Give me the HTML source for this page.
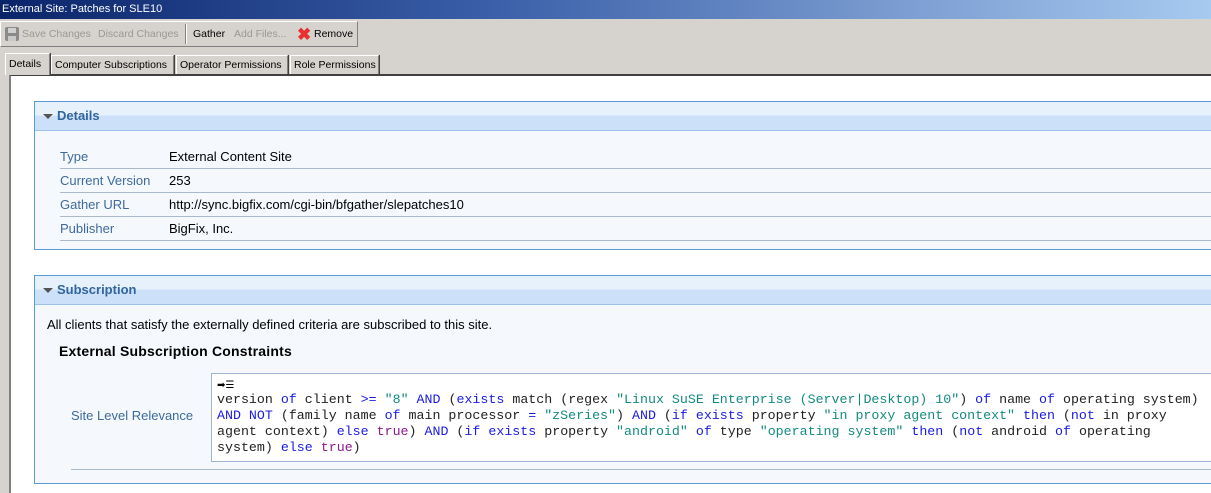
<!DOCTYPE html>
<html><head><style>
*{margin:0;padding:0;box-sizing:border-box}
body{width:1211px;height:493px;overflow:hidden;background:#d6d3ce;font-family:"Liberation Sans",sans-serif;font-size:12px;position:relative}
.a{position:absolute}
.title{left:0;top:0;width:1211px;height:19px;background:linear-gradient(90deg,#0a246a 0%,#3a5ea8 40%,#7c9ed2 75%,#a6caf0 100%);color:#fff;font-size:11px;line-height:19px;padding-left:2px}
.tb{left:0;top:21px;width:358px;height:26px;border:1px solid #808080;border-top-color:#fff;border-left-color:#fff;background:#d6d3ce;font-size:10.5px;line-height:25px;color:#000}
.tb span{position:absolute;top:0}
.dis{color:#9a9895}
.tab{top:55px;height:19px;border:1px solid #808080;border-bottom:none;border-left-color:#fff;border-top-color:#fff;background:#d6d3ce;font-size:10.5px;line-height:18px;padding:0 3px;box-shadow:1px 0 0 #404040;white-space:nowrap;overflow:hidden}
.content{left:9px;top:74px;width:1202px;height:419px;background:#fff;border-left:2px solid #808080;border-top:2px solid #404040}
.panel{left:34px;width:1180px;border:1px solid #5b9bd5;background:#f5f9fe}
.hd{height:29px;background:linear-gradient(#e6f1fc 0,#e6f1fc 48%,#cce0fa 48%);border-bottom:1px solid #9cc1ea;color:#31659c;font-weight:bold;font-size:13px;line-height:28px;padding-left:22px;position:relative}
.hd:before{content:"";position:absolute;left:8px;top:12px;border-left:5px solid transparent;border-right:5px solid transparent;border-top:5px solid #555}
.row{position:absolute;left:25px;width:1160px;height:24px;border-bottom:1px solid #a9b9cc;font-size:13px;line-height:24px}
.row .k{position:absolute;left:0;color:#3d6a9a}
.row .v{position:absolute;left:109px;color:#000}
.code{font-family:"Liberation Mono",monospace;font-size:13.3px;line-height:16px;color:#222;white-space:pre}
.b{color:#1a1ae6}.g{color:#138a80}.p{color:#8b1a8b}
</style></head><body>
<div class="a title">External Site: Patches for SLE10</div>
<div class="a tb">
<svg class="a" style="left:3px;top:4px" width="16" height="16" viewBox="0 0 16 16"><rect x="1" y="1" width="14" height="14" rx="2" fill="#8a8a8a"/><rect x="4" y="2" width="8" height="5" fill="#d0d0d0"/><rect x="4" y="10" width="8" height="5" fill="#c8c8c8"/></svg>
<span class="dis" style="left:21px">Save Changes</span>
<span class="dis" style="left:97px">Discard Changes</span>
<div class="a" style="left:184px;top:2px;width:2px;height:20px;border-left:1px solid #808080;border-right:1px solid #fff"></div>
<span style="left:192px">Gather</span>
<span class="dis" style="left:233px">Add Files...</span>
<span style="left:296px;color:#e83030;font-size:17px;font-weight:bold">✖</span>
<span style="left:313px">Remove</span>
</div>
<div class="a tab" style="left:5px;top:53px;height:22px;width:45px;background:#d6d3ce;z-index:2;line-height:20px">Details</div>
<div class="a tab" style="left:51px;width:123px">Computer Subscriptions</div>
<div class="a tab" style="left:176px;width:112px">Operator Permissions</div>
<div class="a tab" style="left:290px;width:89px">Role Permissions</div>
<div class="a content"></div>
<div class="a panel" style="top:101px;height:149px">
<div class="hd">Details</div>
<div class="row" style="top:43px"><span class="k">Type</span><span class="v">External Content Site</span></div>
<div class="row" style="top:67px"><span class="k">Current Version</span><span class="v">253</span></div>
<div class="row" style="top:91px"><span class="k">Gather URL</span><span class="v">http://sync.bigfix.com/cgi-bin/bfgather/slepatches10</span></div>
<div class="row" style="top:115px"><span class="k">Publisher</span><span class="v">BigFix, Inc.</span></div>
</div>
<div class="a panel" style="top:275px;height:209px">
<div class="hd">Subscription</div>
<div class="a" style="left:12px;top:41px;font-size:13px">All clients that satisfy the externally defined criteria are subscribed to this site.</div>
<div class="a" style="left:24px;top:67px;font-size:14px;font-weight:bold;letter-spacing:.2px">External Subscription Constraints</div>
<div class="a" style="left:36px;top:107px;width:1150px;height:87px;border-bottom:1px solid #a9b9cc"></div>
<div class="a" style="left:36px;top:132px;color:#3d6a9a;font-size:13px">Site Level Relevance</div>
<div class="a" style="left:176px;top:97px;width:1010px;height:89px;border:1px solid #a0b4d8;background:#fff;padding:6px 0 0 5px">
<div style="font-size:10px;line-height:11px">➡☰</div>
<div class="code" style="margin-top:1px">version <span class="b">of</span> client <span class="b">&gt;=</span> <span class="g">"8"</span> <span class="b">AND</span> (<span class="b">exists</span> match (regex <span class="g">"Linux SuSE Enterprise (Server|Desktop) 10"</span>) <span class="b">of</span> name <span class="b">of</span> operating system)
<span class="b">AND NOT</span> (family name <span class="b">of</span> main processor <span class="b">=</span> <span class="g">"zSeries"</span>) <span class="b">AND</span> (<span class="b">if exists</span> property <span class="g">"in proxy agent context"</span> <span class="b">then</span> (<span class="b">not</span> in proxy
agent context) <span class="b">else</span> <span class="p">true</span>) <span class="b">AND</span> (<span class="b">if exists</span> property <span class="g">"android"</span> <span class="b">of</span> type <span class="g">"operating system"</span> <span class="b">then</span> (<span class="b">not</span> android <span class="b">of</span> operating
system) <span class="b">else</span> <span class="p">true</span>)</div>
</div>
</div>
</body></html>
